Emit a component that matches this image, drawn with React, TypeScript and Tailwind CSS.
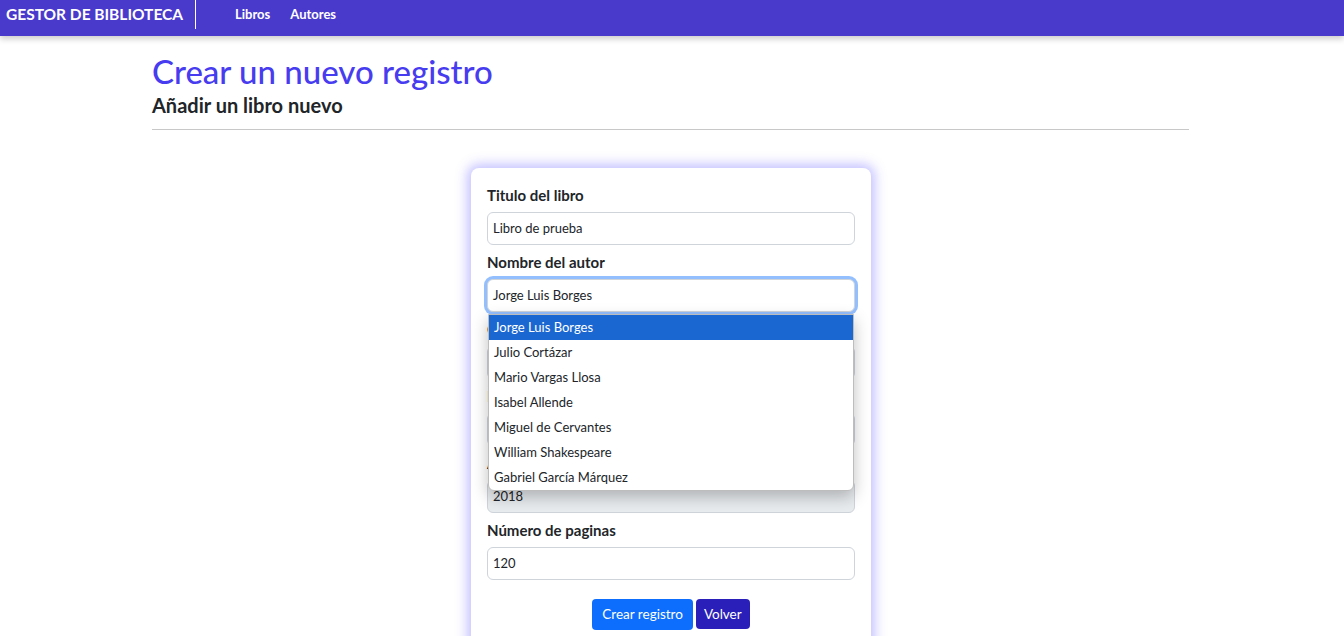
import React from 'react';

const font = { fontFamily: '"Segoe UI", Lato, "Noto Sans", "Liberation Sans", sans-serif' };

const autores = [
  'Jorge Luis Borges',
  'Julio Cortázar',
  'Mario Vargas Llosa',
  'Isabel Allende',
  'Miguel de Cervantes',
  'William Shakespeare',
  'Gabriel García Márquez',
];

const Field = ({ label, value, disabled = false, focused = false, children }: { label: string; value: string; disabled?: boolean; focused?: boolean; children?: React.ReactNode }) => (
  <div className="relative">
    <label className="block h-[24px] text-[15px] font-bold leading-[24px] text-[#212529] mb-[5px]">{label}</label>
    <div
      className={
        'h-[33px] rounded-[6px] border px-[5px] text-[13px] leading-[31px] text-[#212529] ' +
        (disabled ? 'bg-[#e9ecef] border-[#ced4da] ' : 'bg-white border-[#ced4da] ') +
        (focused ? 'border-[#86b7fe] ring-[3px] ring-[#4d94ff]/60' : '')
      }
    >
      {value}
    </div>
    {children}
  </div>
);

export default function App() {
  return (
    <div className="min-h-[636px] bg-white" style={font}>
      <nav className="flex h-[36px] items-start bg-[#4a3acc] shadow-[0_3px_6px_rgba(0,0,0,0.2)]">
        <div className="flex h-[29px] w-[196px] items-center border-r border-white pl-[6px] text-[15.5px] font-bold text-white">
          GESTOR DE BIBLIOTECA
        </div>
        <div className="flex h-[29px] items-center gap-[20px] pl-[39px] text-[13px] font-bold text-white">
          <span>Libros</span>
          <span>Autores</span>
        </div>
      </nav>

      <div className="ml-[152px] mr-[155px] pt-[14px]">
        <h1 className="text-[33px] leading-[42px] font-medium text-[#473cf0]">Crear un nuevo registro</h1>
        <h2 className="text-[20px] leading-[26px] font-bold text-[#212529]">Añadir un libro nuevo</h2>
        <hr className="mt-[11px] border-t border-[#c8c8c8]" />
      </div>

      <div className="mx-auto mt-[38px] w-[400px] -translate-x-[1px] rounded-[8px] bg-white px-[16px] pt-[15px] pb-[20px] shadow-[0_0_12px_4px_rgba(90,80,255,0.35)]">
        <div className="flex flex-col gap-[5px]">
          <Field label="Titulo del libro" value="Libro de prueba" />
          <Field label="Nombre del autor" value="Jorge Luis Borges" focused>
            <div className="absolute left-[1px] right-[1px] top-[64px] z-10 overflow-hidden rounded-b-[6px] border border-[#bdbdbd] bg-white shadow-[0_6px_16px_rgba(0,0,0,0.25)]">
              {autores.map((a, i) => (
                <div
                  key={a}
                  className={
                    'h-[25px] px-[5px] text-[13px] leading-[24px] ' +
                    (i === 0 ? 'bg-[#1a67d2] text-white' : 'text-[#212529]')
                  }
                >
                  {a}
                </div>
              ))}
            </div>
          </Field>
          <Field label="Género" value="Ficción" />
          <Field label="Editorial" value="Sudamericana" />
          <Field label="Año de publicación" value="2018" disabled />
          <Field label="Número de paginas" value="120" />
        </div>
        <div className="mt-[19px] flex justify-center gap-[3px]">
          <button className="h-[31px] rounded-[4px] bg-[#0d6efd] px-[10px] text-[13.5px] text-white">Crear registro</button>
          <button className="h-[30px] rounded-[4px] bg-[#2a1fb8] px-[8px] text-[13.5px] text-white">Volver</button>
        </div>
      </div>
    </div>
  );
}
